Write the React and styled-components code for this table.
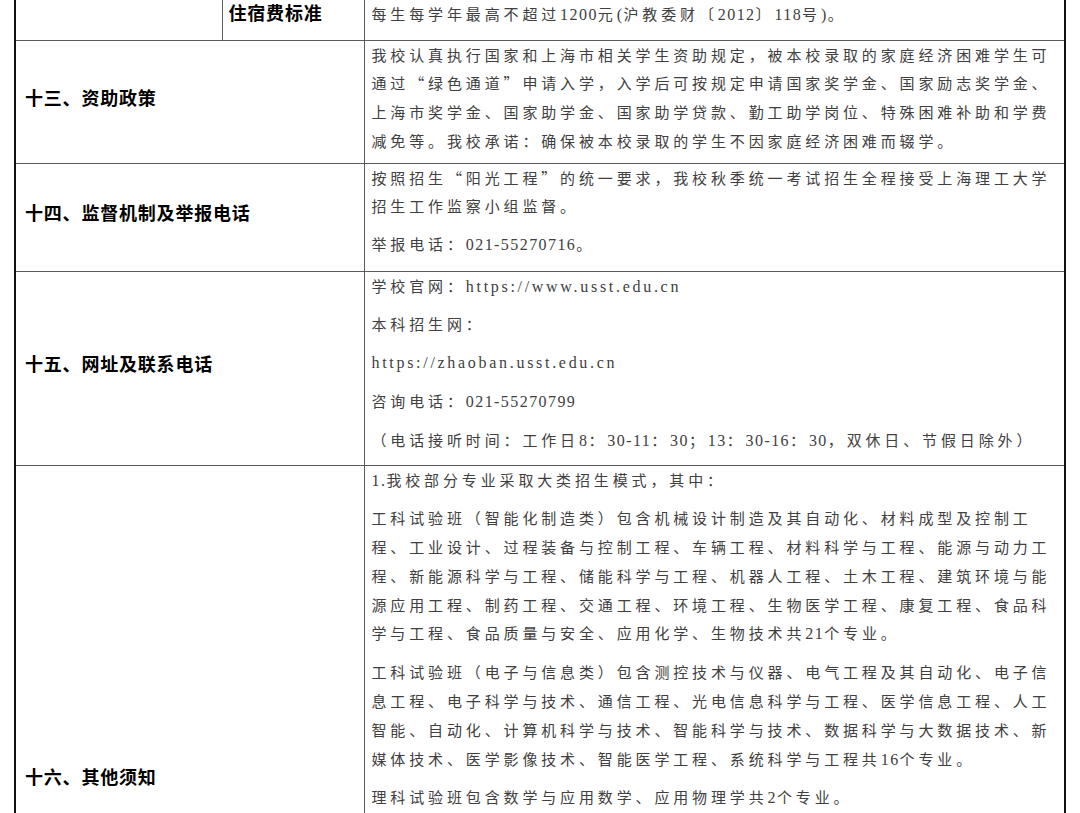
import React from "react";
import styled, { createGlobalStyle } from "styled-components";

const GlobalStyle = createGlobalStyle`
  body {
    margin: 0;
    background: #fff;
  }
`;

const Page = styled.div`
  padding-left: 14px;
  margin-top: -10px;
`;

const Table = styled.table`
  width: 1050px;
  border-collapse: collapse;
  table-layout: fixed;
  border-left: 2px solid #111;
  border-right: 2px solid #111;
  font-family: "Noto Sans CJK SC", sans-serif;
`;

const Col = styled.col`
  width: ${({ $w }) => $w}px;
`;

const Row = styled.tr`
  height: ${({ $h }) => $h}px;

  & > td {
    border-bottom: 1px solid #5a5a5a;
  }
`;

const Blank = styled.td`
  padding: 0;
  border-right: 1px solid #5a5a5a;
`;

const Label = styled.td`
  padding: 0 0 ${({ $lift = 10 }) => $lift}px ${({ $indent }) => $indent}px;
  vertical-align: middle;
  font-size: 18px;
  font-weight: 700;
  letter-spacing: 0.8px;
  color: #000;
  white-space: nowrap;
  border-right: 1px solid #5a5a5a;
`;

const Content = styled.td`
  padding: 0 8px 0 7px;
  vertical-align: ${({ $middle }) => ($middle ? "middle" : "top")};
  font-size: 15px;
  letter-spacing: 3.86px;
  line-height: 28.8px;
  color: #404040;
`;

const P = styled.p`
  margin: 0 0 9px;

  &:last-child {
    margin-bottom: 0;
  }
`;

const Latin = styled.span`
  font-family: "Liberation Serif", serif;
  font-size: 16px;
  letter-spacing: ${({ $url }) => ($url ? "2.7px" : "1.43px")};
`;

const App = () => {
  return (
    <>
      <GlobalStyle />
      <Page>
        <Table>
          <colgroup>
            <Col $w={207} />
            <Col $w={142} />
            <Col $w={701} />
          </colgroup>
          <tbody>
            <Row $h={50}>
              <Blank />
              <Label $indent={6} $lift={5}>住宿费标准</Label>
              <Content $middle>
                每生每学年最高不超过<Latin>1200</Latin>元<Latin>(</Latin>沪教委财〔<Latin>2012</Latin>〕<Latin>118</Latin>号<Latin>)</Latin>。
              </Content>
            </Row>

            {/* 十三 */}
            <Row $h={123}>
              <Label colSpan={2} $indent={9}>十三、资助政策</Label>
              <Content>
                <P>
                  我校认真执行国家和上海市相关学生资助规定，被本校录取的家庭经济困难学生可通过“绿色通道”申请入学，入学后可按规定申请国家奖学金、国家励志奖学金、上海市奖学金、国家助学金、国家助学贷款、勤工助学岗位、特殊困难补助和学费减免等。我校承诺：确保被本校录取的学生不因家庭经济困难而辍学。
                </P>
              </Content>
            </Row>

            {/* 十四 */}
            <Row $h={108}>
              <Label colSpan={2} $indent={9}>十四、监督机制及举报电话</Label>
              <Content>
                <P>
                  按照招生“阳光工程”的统一要求，我校秋季统一考试招生全程接受上海理工大学招生工作监察小组监督。
                </P>
                <P>
                  举报电话：<Latin>021-55270716</Latin>。
                </P>
              </Content>
            </Row>

            {/* 十五 */}
            <Row $h={194}>
              <Label colSpan={2} $indent={9}>十五、网址及联系电话</Label>
              <Content>
                <P>
                  学校官网：<Latin $url>https://www.usst.edu.cn</Latin>
                </P>
                <P>本科招生网：</P>
                <P>
                  <Latin $url>https://zhaoban.usst.edu.cn</Latin>
                </P>
                <P>
                  咨询电话：<Latin>021-55270799</Latin>
                </P>
                <P>
                  （电话接听时间：工作日<Latin>8</Latin>：<Latin>30-11</Latin>：<Latin>30</Latin>；<Latin>13</Latin>：<Latin>30-16</Latin>：<Latin>30</Latin>，双休日、节假日除外）
                </P>
              </Content>
            </Row>

            {/* 十六 */}
            <Row $h={632}>
              <Label colSpan={2} $indent={9}>十六、其他须知</Label>
              <Content>
                <P>
                  <Latin>1.</Latin>我校部分专业采取大类招生模式，其中：
                </P>
                <P>
                  工科试验班（智能化制造类）包含机械设计制造及其自动化、材料成型及控制工程、工业设计、过程装备与控制工程、车辆工程、材料科学与工程、能源与动力工程、新能源科学与工程、储能科学与工程、机器人工程、土木工程、建筑环境与能源应用工程、制药工程、交通工程、环境工程、生物医学工程、康复工程、食品科学与工程、食品质量与安全、应用化学、生物技术共<Latin>21</Latin>个专业。
                </P>
                <P>
                  工科试验班（电子与信息类）包含测控技术与仪器、电气工程及其自动化、电子信息工程、电子科学与技术、通信工程、光电信息科学与工程、医学信息工程、人工智能、自动化、计算机科学与技术、智能科学与技术、数据科学与大数据技术、新媒体技术、医学影像技术、智能医学工程、系统科学与工程共<Latin>16</Latin>个专业。
                </P>
                <P>
                  理科试验班包含数学与应用数学、应用物理学共<Latin>2</Latin>个专业。
                </P>
              </Content>
            </Row>
          </tbody>
        </Table>
      </Page>
    </>
  );
};

export default App;
